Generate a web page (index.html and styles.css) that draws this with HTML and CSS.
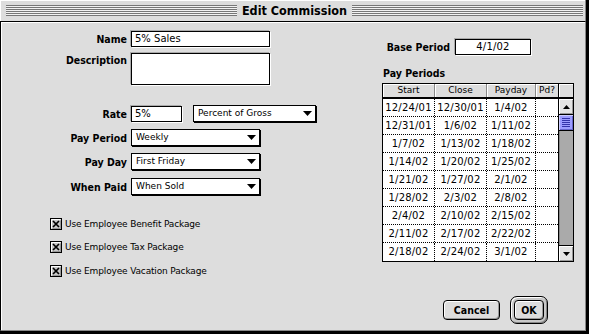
FILE: index.html
```html
<!DOCTYPE html>
<html>
<head>
<meta charset="utf-8">
<link rel="stylesheet" href="styles.css">
</head>
<body>
<div class="window">
  <div class="titlebar">
    <div class="stripes"></div>
    <span class="title">Edit Commission</span>
    <div class="stripes"></div>
  </div>
  <div class="content">
    <div class="main">
      <div class="left">
        <div class="row">
          <span class="label">Name</span>
          <div class="edit name">5% Sales</div>
        </div>
        <div class="row top desc-row">
          <span class="label desc-label">Description</span>
          <div class="edit desc"></div>
        </div>
        <div class="row rate-row">
          <span class="label">Rate</span>
          <div class="edit rate">5%</div>
          <div class="popup wide"><span>Percent of Gross</span><svg class="arrow" width="9" height="5" viewBox="0 0 9 5"><path d="M0 0h9l-4.5 5z" fill="#000"/></svg></div>
        </div>
        <div class="row pop-row">
          <span class="label">Pay Period</span>
          <div class="popup"><span>Weekly</span><svg class="arrow" width="9" height="5" viewBox="0 0 9 5"><path d="M0 0h9l-4.5 5z" fill="#000"/></svg></div>
        </div>
        <div class="row pop-row">
          <span class="label">Pay Day</span>
          <div class="popup"><span>First Friday</span><svg class="arrow" width="9" height="5" viewBox="0 0 9 5"><path d="M0 0h9l-4.5 5z" fill="#000"/></svg></div>
        </div>
        <div class="row pop-row last">
          <span class="label">When Paid</span>
          <div class="popup"><span>When Sold</span><svg class="arrow" width="9" height="5" viewBox="0 0 9 5"><path d="M0 0h9l-4.5 5z" fill="#000"/></svg></div>
        </div>
        <div class="checks">
          <div class="check c1"><svg class="cb" width="12" height="12" viewBox="0 0 12 12"><rect x="0.5" y="0.5" width="11" height="11" fill="#c8c8c8" stroke="#000"/><path d="M1.5 10.5V1.5H10.5" stroke="#fff" fill="none"/><path d="M2.5 10.5H10.5V2.5" stroke="#999" fill="none"/><path d="M3 3L9 9M9 3L3 9" stroke="#000" stroke-width="1.7"/></svg><span>Use Employee Benefit Package</span></div>
          <div class="check c2"><svg class="cb" width="12" height="12" viewBox="0 0 12 12"><rect x="0.5" y="0.5" width="11" height="11" fill="#c8c8c8" stroke="#000"/><path d="M1.5 10.5V1.5H10.5" stroke="#fff" fill="none"/><path d="M2.5 10.5H10.5V2.5" stroke="#999" fill="none"/><path d="M3 3L9 9M9 3L3 9" stroke="#000" stroke-width="1.7"/></svg><span>Use Employee Tax Package</span></div>
          <div class="check c3"><svg class="cb" width="12" height="12" viewBox="0 0 12 12"><rect x="0.5" y="0.5" width="11" height="11" fill="#c8c8c8" stroke="#000"/><path d="M1.5 10.5V1.5H10.5" stroke="#fff" fill="none"/><path d="M2.5 10.5H10.5V2.5" stroke="#999" fill="none"/><path d="M3 3L9 9M9 3L3 9" stroke="#000" stroke-width="1.7"/></svg><span>Use Employee Vacation Package</span></div>
        </div>
      </div>
      <div class="right">
        <div class="base-row">
          <span class="base-label">Base Period</span>
          <div class="edit base">4/1/02</div>
        </div>
        <div class="pp-label">Pay Periods</div>
        <div class="table">
          <div class="thead">
            <div class="th c-start">Start</div>
            <div class="th c-close">Close</div>
            <div class="th c-pay">Payday</div>
            <div class="th c-pd">Pd?</div>
            <div class="th c-sb"></div>
          </div>
          <div class="tbody">
            <div class="cols">
              <div class="tr"><div class="td c-start">12/24/01</div><div class="td c-close">12/30/01</div><div class="td c-pay">1/4/02</div><div class="td c-pd"></div></div>
              <div class="tr"><div class="td c-start">12/31/01</div><div class="td c-close">1/6/02</div><div class="td c-pay">1/11/02</div><div class="td c-pd"></div></div>
              <div class="tr"><div class="td c-start">1/7/02</div><div class="td c-close">1/13/02</div><div class="td c-pay">1/18/02</div><div class="td c-pd"></div></div>
              <div class="tr"><div class="td c-start">1/14/02</div><div class="td c-close">1/20/02</div><div class="td c-pay">1/25/02</div><div class="td c-pd"></div></div>
              <div class="tr"><div class="td c-start">1/21/02</div><div class="td c-close">1/27/02</div><div class="td c-pay">2/1/02</div><div class="td c-pd"></div></div>
              <div class="tr"><div class="td c-start">1/28/02</div><div class="td c-close">2/3/02</div><div class="td c-pay">2/8/02</div><div class="td c-pd"></div></div>
              <div class="tr"><div class="td c-start">2/4/02</div><div class="td c-close">2/10/02</div><div class="td c-pay">2/15/02</div><div class="td c-pd"></div></div>
              <div class="tr"><div class="td c-start">2/11/02</div><div class="td c-close">2/17/02</div><div class="td c-pay">2/22/02</div><div class="td c-pd"></div></div>
              <div class="tr"><div class="td c-start">2/18/02</div><div class="td c-close">2/24/02</div><div class="td c-pay">3/1/02</div><div class="td c-pd"></div></div>
            </div>
            <div class="scroll">
              <div class="sb-arrow up"><svg width="7" height="4" viewBox="0 0 7 4"><path d="M3.5 0L7 4H0z" fill="#000"/></svg></div>
              <div class="thumb"><div class="grip"></div></div>
              <div class="track"></div>
              <div class="sb-arrow down"><svg width="7" height="4" viewBox="0 0 7 4"><path d="M0 0H7L3.5 4z" fill="#000"/></svg></div>
            </div>
          </div>
        </div>
      </div>
    </div>
    <div class="buttons">
      <div class="btn cancel">Cancel</div>
      <div class="okring"><div class="btn ok">OK</div></div>
    </div>
  </div>
</div>
</body>
</html>
```
FILE: styles.css
```css
* { box-sizing: border-box; }
html, body { margin: 0; padding: 0; }
body {
  width: 589px;
  height: 334px;
  overflow: hidden;
  background: #000;
  font-family: "DejaVu Sans", sans-serif;
  font-size: 9px;
  color: #000;
}
.window {
  width: 589px;
  height: 334px;
  display: flex;
  flex-direction: column;
  background: #dddddd;
  border-right: 3px solid #000;
  border-bottom: 3px solid #000;
}
.titlebar {
  flex: none;
  height: 22px;
  display: flex;
  align-items: center;
  padding: 0 2px 0 6px;
  border-bottom: 1px solid #000;
  border-right: 1px solid #888;
  box-shadow: inset 1px 1px 0 #fff;
}
.stripes {
  flex: 1;
  height: 11px;
  background: repeating-linear-gradient(to bottom, #777 0 1px, #f2f2f2 1px 2px);
}
.title {
  padding: 0 5px;
  font-family: "DejaVu Sans Condensed", "DejaVu Sans", sans-serif;
  font-stretch: condensed;
  font-weight: bold;
  font-size: 12.5px;
  line-height: 21px;
}
.content {
  flex: 1;
  display: flex;
  flex-direction: column;
  border-left: 1px solid #000;
  border-right: 1px solid #888;
  border-bottom: 1px solid #888;
  box-shadow: inset 1px 1px 0 #fff;
}
.main { display: flex; }
.left { width: 381px; padding-top: 9px; }
.right { flex: 1; padding-top: 17px; }

.row { display: flex; align-items: center; height: 16px; }
.row.top { align-items: flex-start; height: auto; }
.label, .base-label, .pp-label, .btn {
  font-family: "DejaVu Sans Condensed", "DejaVu Sans", sans-serif;
  font-stretch: condensed;
  font-weight: bold;
  font-size: 10.5px;
}
.label {
  width: 130px;
  padding-right: 4px;
  text-align: right;
  line-height: 14px;
}
.desc-row { margin-top: 6px; }
.desc-label { line-height: 14px; }
.edit {
  background: #fff;
  border: 1px solid #000;
  box-shadow: -1px -1px 0 #aaa, 1px 1px 0 #fff;
  font-size: 10px;
  line-height: 14px;
  padding-left: 3px;
  white-space: nowrap;
}
.name { width: 139px; height: 16px; }
.desc { width: 139px; height: 32px; }
.rate-row { margin-top: 20px; height: 18px; }
.rate { width: 51px; height: 16px; }
.pop-row { margin-top: 6px; height: 18px; }
.pop-row.last { margin-top: 7px; }
.popup {
  width: 129px;
  height: 17px;
  background: #fff;
  border: 1px solid #000;
  box-shadow: 1px 1px 0 #000;
  display: flex;
  align-items: center;
  justify-content: space-between;
  padding: 0 3px 0 4px;
  font-size: 9px;
  line-height: 15px;
  align-self: flex-start;
}
.popup.wide { width: 123px; margin-left: 11px; }
.rate-row .rate { align-self: flex-start; margin-top: 1px; }
.arrow { display: block; }

.checks { padding-left: 49px; margin-top: 22px; }
.check { display: flex; align-items: center; height: 12px; gap: 3px; font-size: 9px; letter-spacing: -0.15px; }
.check.c2 { margin-top: 11px; }
.check.c3 { margin-top: 12px; }
.cb { display: block; flex: none; }

.base-row { display: flex; align-items: center; height: 16px; }
.base-label { width: 68px; text-align: right; line-height: 14px; }
.base { width: 76px; height: 16px; margin-left: 5px; text-align: center; padding-left: 0; letter-spacing: 0.2px; }
.pp-label { margin-top: 12px; padding-left: 1px; line-height: 12px; }

.table {
  margin-top: 4px;
  width: 192px;
  border: 1px solid #000;
  background: #fff;
}
.thead {
  display: flex;
  height: 15px;
  border-bottom: 2px solid #000;
  background: #dddddd;
}
.th {
  height: 13px;
  line-height: 13px;
  text-align: center;
  font-size: 9px;
  border-right: 1px solid #888;
  box-shadow: inset 1px 1px 0 #fff;
}
.c-start { width: 52px; }
.c-close { width: 52px; }
.c-pay { width: 49px; }
.c-pd { width: 22px; }
.th.c-pd { border-right: none; }
.th.c-sb { width: 15px; border-right: none; border-left: 1px solid #000; }
.tbody { display: flex; }
.cols { width: 175px; }
.tr { display: flex; height: 18px; border-bottom: 1px dotted #000; }
.tr:last-child { border-bottom: none; }
.td {
  text-align: center;
  font-size: 10px;
  letter-spacing: 0.2px;
  line-height: 17px;
  border-right: 1px dotted #000;
  white-space: nowrap;
}
.td.c-pd { border-right: none; }
.scroll {
  width: 15px;
  border-left: 1px solid #000;
  display: flex;
  flex-direction: column;
  height: 162px;
}
.sb-arrow {
  height: 16px;
  background: #e4e4e4;
  box-shadow: inset 1px 1px 0 #fff, inset -1px -1px 0 #999;
  display: flex;
  align-items: center;
  justify-content: center;
}
.sb-arrow svg { display: block; }
.sb-arrow.up { border-bottom: 1px solid #000; }
.sb-arrow.down { border-top: 1px solid #000; }
.thumb {
  height: 16px;
  background: #9c9cff;
  border-bottom: 1px solid #000;
  box-shadow: inset 1px 1px 0 #ccccff, inset -1px -1px 0 #6666cc;
  display: flex;
  align-items: center;
  justify-content: center;
}
.grip {
  width: 8px;
  height: 9px;
  background: repeating-linear-gradient(to bottom, #3333aa 0 1px, transparent 1px 2px);
}
.track {
  flex: 1;
  background: #aaaaaa;
  box-shadow: inset 1px 0 0 #888;
}

.buttons {
  margin-top: auto;
  display: flex;
  justify-content: flex-end;
  align-items: center;
  gap: 10px;
  padding: 0 37px 6px 0;
}
.btn {
  height: 20px;
  border: 1px solid #000;
  border-radius: 4px;
  background: #dddddd;
  box-shadow: inset 1px 1px 0 #fff, inset -1px -1px 0 #999;
  text-align: center;
  line-height: 18px;
}
.cancel { width: 57px; }
.okring {
  width: 38px;
  height: 28px;
  border: 1px solid #000;
  border-radius: 7px;
  padding: 3px;
  background: #c8c8c8;
  box-shadow: inset 1px 1px 0 #fff, inset -1px -1px 0 #888;
}
.ok { width: 30px; }
```
